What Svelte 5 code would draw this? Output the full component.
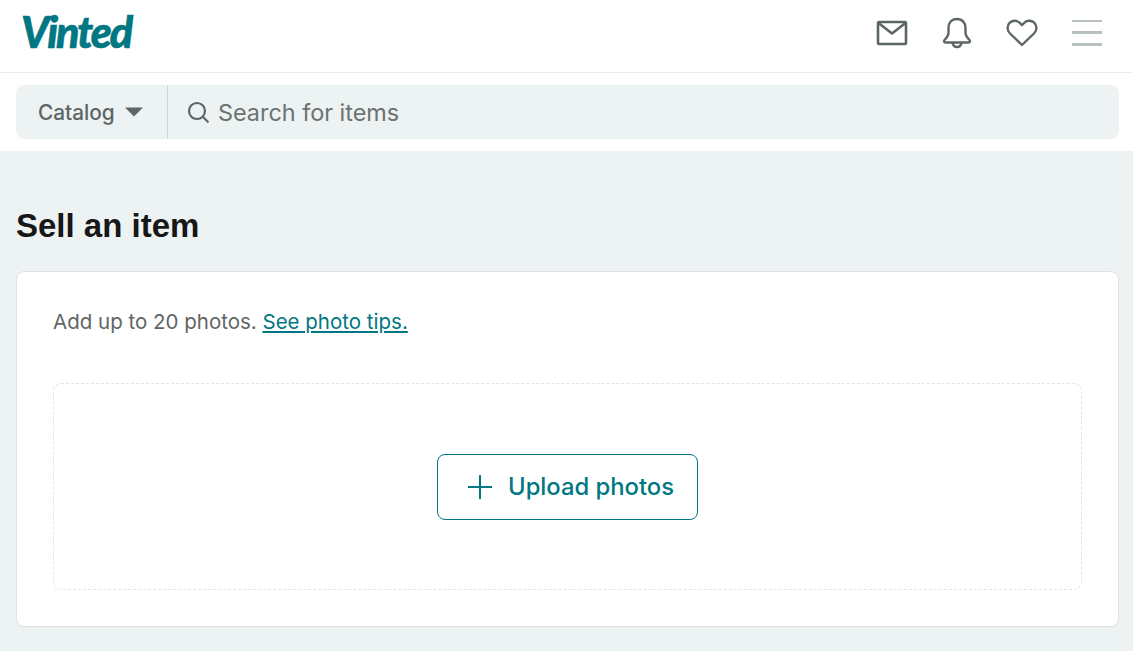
<script lang="ts">
	const headerIcons = ['mail', 'bell', 'heart'];
</script>

<div class="page">
	<header class="top">
		<div class="top-row">
			<a class="logo" href="#home">Vinted</a>
			<nav class="icons">
				{#each headerIcons as icon}
					<button class="icon-btn" aria-label={icon}>
						{#if icon === 'mail'}
							<svg width="32" height="26" viewBox="0 0 32 26" fill="none" stroke="#5c6666" stroke-width="2.6" stroke-linejoin="round">
								<rect x="2" y="2" width="28" height="22" rx="1" />
								<path d="M2.500 3 16 13.500 29.500 3" />
							</svg>
						{:else if icon === 'bell'}
							<svg width="30" height="32" viewBox="0 0 30 32" fill="none" stroke="#5c6666" stroke-width="2.4" stroke-linejoin="round">
								<path d="M15 2c-5.500 0-8.500 4-8.500 9v4.500c0 3-1.500 5-4 7.500-1 1-.5 2.500 1 2.500h23c1.500 0 2-1.500 1-2.500-2.500-2.500-4-4.500-4-7.500V11c0-5-3-9-8.500-9Z" />
								<path d="M10.500 26c.5 2.500 2.300 4 4.500 4s4-1.500 4.500-4" />
							</svg>
						{:else}
							<svg width="32" height="28" viewBox="0 0 32 28" fill="none" stroke="#5c6666" stroke-width="2.4" stroke-linejoin="round">
								<path d="M16 26 4 14.500C.8 11.300.8 6.500 3.800 3.700c3-2.700 7.700-2.500 10.400.5L16 6.200l1.800-2c2.700-3 7.400-3.200 10.400-.5 3 2.800 3 7.600-.2 10.800L16 26Z" />
							</svg>
						{/if}
					</button>
				{/each}
				<button class="burger" aria-label="menu">
					<span></span>
					<span></span>
					<span></span>
				</button>
			</nav>
		</div>
		<div class="search-row">
			<div class="search">
				<button class="catalog">
					Catalog
					<svg width="18" height="10" viewBox="0 0 18 10"><path d="M0 .5h18L9 9.500Z" fill="#5c6666" /></svg>
				</button>
				<div class="field">
					<svg width="22" height="22" viewBox="0 0 22 22" fill="none" stroke="#5c6666" stroke-width="2.200">
						<circle cx="10" cy="10" r="8" />
						<path d="m15.800 15.800 5 5" stroke-linecap="round" />
					</svg>
					<span class="placeholder">Search for items</span>
				</div>
			</div>
		</div>
	</header>

	<main class="content">
		<h1>Sell an item</h1>
		<section class="card">
			<p class="hint">Add up to 20 photos. <a href="#tips">See photo tips.</a></p>
			<div class="dropzone">
				<button class="upload">
					<svg width="26" height="26" viewBox="0 0 26 26" stroke="#007782" stroke-width="2" fill="none">
						<path d="M13 1v24M1 13h24" />
					</svg>
					Upload photos
				</button>
			</div>
		</section>
	</main>
</div>

<style>
	:global(body) {
		background: #edf2f2;
	}

	.page {
		height: 651px;
		overflow: hidden;
		background: #edf2f2;
		font-family: Inter, 'Noto Sans', sans-serif;
	}

	.top {
		background: #fff;
	}

	.top-row {
		height: 73px;
		box-sizing: border-box;
		border-bottom: 1px solid #ebebeb;
		display: flex;
		align-items: center;
		justify-content: space-between;
		padding: 0 31px 7px 21px;
	}

	.logo {
		color: #007782;
		font-family: Lato, sans-serif;
		font-weight: 900;
		font-style: italic;
		font-size: 43px;
		letter-spacing: -2px;
		-webkit-text-stroke: 0.6px #007782;
		text-decoration: none;
		line-height: 1;
		padding-bottom: 2px;
	}

	.icons {
		display: flex;
		align-items: center;
		gap: 31px;
	}

	.icon-btn,
	.burger,
	.catalog,
	.upload {
		border: 0;
		padding: 0;
		background: none;
		font-family: inherit;
	}

	.icon-btn {
		width: 34px;
		display: flex;
		justify-content: center;
	}

	.burger {
		width: 30px;
		height: 26px;
		margin-left: 2px;
		display: flex;
		flex-direction: column;
		justify-content: space-between;
	}

	.burger span {
		height: 2.500px;
		background: #b8c0c2;
	}

	.search-row {
		padding: 12px 14px 12px 16px;
	}

	.search {
		height: 54px;
		background: #edf2f2;
		border-radius: 8px;
		display: flex;
		align-items: stretch;
	}

	.catalog {
		width: 152px;
		box-sizing: border-box;
		border-right: 1px solid #ced5d6;
		display: flex;
		align-items: center;
		gap: 10px;
		padding-left: 22px;
		font-size: 20.800px;
		font-weight: 500;
		color: #5c6666;
	}

	.field {
		display: flex;
		align-items: center;
		gap: 9px;
		padding-left: 19px;
	}

	.placeholder {
		font-size: 23.400px;
		color: #6b7272;
	}

	.content {
		padding: 55px 14px 0 16px;
	}

	h1 {
		margin: 0 0 25px;
		font-family: 'Liberation Sans', Arial, sans-serif;
		font-size: 33px;
		line-height: 40px;
		font-weight: 700;
		color: #171717;
	}

	.card {
		height: 356px;
		box-sizing: border-box;
		background: #fff;
		border: 1px solid #dfe3e3;
		border-radius: 8px;
		padding: 36px;
	}

	.hint {
		margin: 0 0 47px;
		font-size: 20.500px;
		line-height: 28px;
		color: #5f6666;
	}

	.hint a {
		color: #007782;
	}

	.dropzone {
		height: 207px;
		box-sizing: border-box;
		border: 1px dashed #e2e5e5;
		border-radius: 8px;
		display: flex;
		align-items: center;
		justify-content: center;
	}

	.upload {
		width: 261px;
		height: 66px;
		box-sizing: border-box;
		border: 1px solid #007782;
		border-radius: 8px;
		padding-left: 6px;
		display: flex;
		align-items: center;
		justify-content: center;
		gap: 15px;
		font-size: 23.800px;
		font-weight: 500;
		color: #007782;
	}
</style>
